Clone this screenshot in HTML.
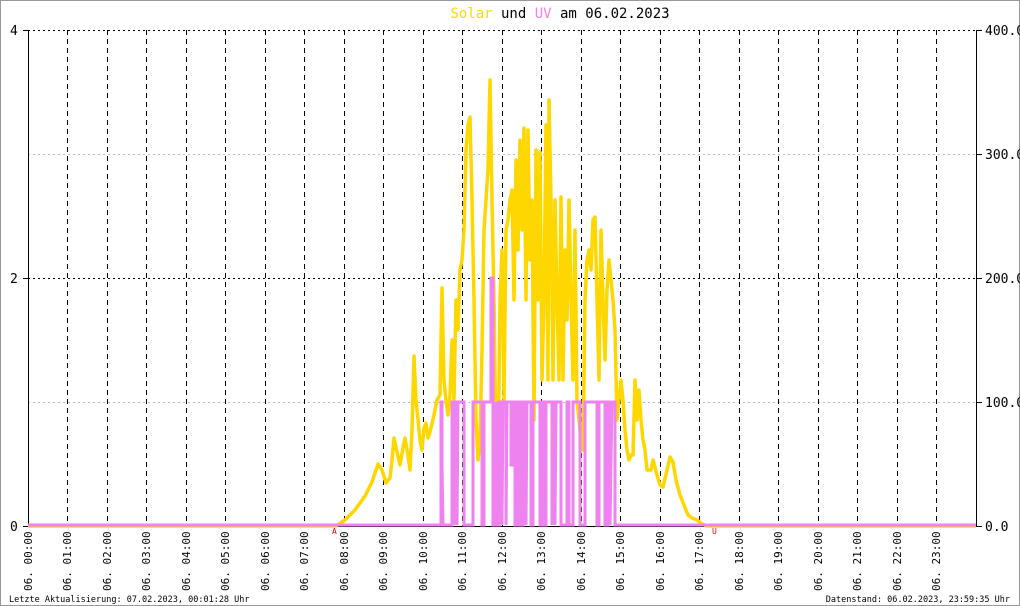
<!DOCTYPE html>
<html><head><meta charset="utf-8"><style>
html,body{margin:0;padding:0;background:#fff}
svg{display:block}
text{font-family:"DejaVu Sans Mono","Liberation Mono",monospace}
</style></head><body>
<svg width="1020" height="606" viewBox="0 0 1020 606" xmlns="http://www.w3.org/2000/svg">
<rect x="0.5" y="0.5" width="1019" height="605" fill="#fff" stroke="#999" stroke-width="1"/>
<text x="560" y="18" font-size="14" text-anchor="middle"><tspan fill="#ffd700">Solar</tspan> und <tspan fill="#ee82ee">UV</tspan> am 06.02.2023</text>
<g stroke-width="1" stroke-dasharray="2,3">
<line x1="28" y1="30.5" x2="976" y2="30.5" stroke="#000"/>
<line x1="28" y1="154.5" x2="976" y2="154.5" stroke="#bbb"/>
<line x1="28" y1="278.5" x2="976" y2="278.5" stroke="#000"/>
<line x1="28" y1="402.5" x2="976" y2="402.5" stroke="#bbb"/>
</g>
<g stroke="#000" stroke-width="1" stroke-dasharray="5,4">
<line x1="67.5" y1="30" x2="67.5" y2="526"/><line x1="107.5" y1="30" x2="107.5" y2="526"/><line x1="146.5" y1="30" x2="146.5" y2="526"/><line x1="186.5" y1="30" x2="186.5" y2="526"/><line x1="225.5" y1="30" x2="225.5" y2="526"/><line x1="265.5" y1="30" x2="265.5" y2="526"/><line x1="304.5" y1="30" x2="304.5" y2="526"/><line x1="344.5" y1="30" x2="344.5" y2="526"/><line x1="383.5" y1="30" x2="383.5" y2="526"/><line x1="423.5" y1="30" x2="423.5" y2="526"/><line x1="462.5" y1="30" x2="462.5" y2="526"/><line x1="502.5" y1="30" x2="502.5" y2="526"/><line x1="541.5" y1="30" x2="541.5" y2="526"/><line x1="581.5" y1="30" x2="581.5" y2="526"/><line x1="620.5" y1="30" x2="620.5" y2="526"/><line x1="660.5" y1="30" x2="660.5" y2="526"/><line x1="699.5" y1="30" x2="699.5" y2="526"/><line x1="739.5" y1="30" x2="739.5" y2="526"/><line x1="778.5" y1="30" x2="778.5" y2="526"/><line x1="818.5" y1="30" x2="818.5" y2="526"/><line x1="857.5" y1="30" x2="857.5" y2="526"/><line x1="897.5" y1="30" x2="897.5" y2="526"/><line x1="936.5" y1="30" x2="936.5" y2="526"/>
</g>
<g stroke="#000" stroke-width="1">
<line x1="28.5" y1="30" x2="28.5" y2="527"/>
<line x1="976.5" y1="30" x2="976.5" y2="527"/>
<line x1="28" y1="526.5" x2="977" y2="526.5"/>
<line x1="23" y1="30.5" x2="29" y2="30.5"/><line x1="23" y1="278.5" x2="29" y2="278.5"/><line x1="23" y1="526.5" x2="29" y2="526.5"/>
<line x1="976" y1="30.5" x2="982" y2="30.5"/><line x1="976" y1="154.5" x2="982" y2="154.5"/><line x1="976" y1="278.5" x2="982" y2="278.5"/><line x1="976" y1="402.5" x2="982" y2="402.5"/><line x1="976" y1="526.5" x2="982" y2="526.5"/>
</g>
<g font-size="13" fill="#000">
<text x="10" y="35">4</text><text x="10" y="283">2</text><text x="10" y="531">0</text>
<text x="985" y="35">400.0</text><text x="985" y="159">300.0</text><text x="985" y="283">200.0</text><text x="985" y="407">100.0</text><text x="985" y="531">0.0</text>
</g>
<polyline fill="none" stroke="#ffd700" stroke-width="3.5" stroke-linejoin="round" points="28,526 336,526 345,520 355,510 365,496 372,482 378,464 382,470 386,483 390,478 392,460 394,438 397,452 400,465 403,448 405,438 408,455 410,470 412,430 414,356 416,400 418,420 420,440 422,450 424,428 426,423 428,438 430,432 434,415 437,400 440,395 442,288 444,380 446,400 448,415 450,395 452,340 454,400 456,300 458,330 460,270 462,260 464,230 466,150 468,125 470,117 472,200 474,300 476,420 478,460 480,440 482,350 484,230 486,200 488,170 490,80 492,200 494,300 496,450 498,470 500,300 502,250 504,400 506,230 508,220 510,200 512,190 514,300 516,160 518,250 520,140 522,230 524,128 526,300 528,130 530,260 532,200 534,420 536,150 538,300 540,152 542,380 544,300 546,125 548,380 549,100 551,200 553,380 555,200 557,300 559,380 561,197 563,380 565,250 567,320 569,200 571,300 573,380 575,230 577,400 579,420 581,440 583,450 585,300 587,260 589,250 591,270 593,220 595,217 597,300 599,380 601,230 603,300 605,360 607,290 609,260 611,280 613,300 615,330 617,420 619,400 621,380 623,400 625,430 627,450 629,460 631,455 633,455 635,380 637,420 639,390 641,420 643,440 645,450 647,470 651,470 653,460 657,475 660,485 663,487 667,470 670,457 673,462 676,480 680,495 684,505 688,515 692,518 697,520 702,524 707,526 976,526"/>
<polyline fill="none" stroke="#ee82ee" stroke-width="3" stroke-linejoin="miter" points="28,525 441,525 441,402 442,402 442,465 443,525 452,525 452,402 454,402 454,525 455,402 457,402 457,525 458,402 464,402 464,525 473,525 473,402 482,402 482,525 484,525 484,402 491,402 491,278 493,278 493,525 496,525 496,402 497,525 499,525 499,402 502,402 502,525 503,402 506,402 506,525 507,402 511,402 511,465 513,465 513,402 515,402 515,525 518,525 518,402 521,402 521,525 523,525 523,402 526,402 526,525 527,402 531,402 531,525 533,525 533,402 540,402 540,525 542,525 542,402 544,402 544,525 546,525 546,402 552,402 552,525 553,402 555,402 555,525 556,402 561,402 561,525 567,525 567,402 569,402 569,525 573,525 573,402 580,402 580,525 585,525 585,402 597,402 597,525 599,525 599,402 605,402 605,525 608,525 608,402 610,402 610,525 612,402 615,402 615,525 976,525"/>
<text x="332" y="534" font-size="8" fill="#f00">A</text>
<text x="712" y="534" font-size="8" fill="#f00">U</text>
<g font-size="11" fill="#000">
<text transform="translate(32,591) rotate(-90)">06. 00:00</text>
<text transform="translate(71,591) rotate(-90)">06. 01:00</text>
<text transform="translate(111,591) rotate(-90)">06. 02:00</text>
<text transform="translate(150,591) rotate(-90)">06. 03:00</text>
<text transform="translate(190,591) rotate(-90)">06. 04:00</text>
<text transform="translate(229,591) rotate(-90)">06. 05:00</text>
<text transform="translate(269,591) rotate(-90)">06. 06:00</text>
<text transform="translate(308,591) rotate(-90)">06. 07:00</text>
<text transform="translate(348,591) rotate(-90)">06. 08:00</text>
<text transform="translate(387,591) rotate(-90)">06. 09:00</text>
<text transform="translate(427,591) rotate(-90)">06. 10:00</text>
<text transform="translate(466,591) rotate(-90)">06. 11:00</text>
<text transform="translate(506,591) rotate(-90)">06. 12:00</text>
<text transform="translate(545,591) rotate(-90)">06. 13:00</text>
<text transform="translate(585,591) rotate(-90)">06. 14:00</text>
<text transform="translate(624,591) rotate(-90)">06. 15:00</text>
<text transform="translate(664,591) rotate(-90)">06. 16:00</text>
<text transform="translate(703,591) rotate(-90)">06. 17:00</text>
<text transform="translate(743,591) rotate(-90)">06. 18:00</text>
<text transform="translate(782,591) rotate(-90)">06. 19:00</text>
<text transform="translate(822,591) rotate(-90)">06. 20:00</text>
<text transform="translate(861,591) rotate(-90)">06. 21:00</text>
<text transform="translate(901,591) rotate(-90)">06. 22:00</text>
<text transform="translate(940,591) rotate(-90)">06. 23:00</text>
</g>
<text x="9" y="602" font-size="8.5" fill="#000">Letzte Aktualisierung: 07.02.2023, 00:01:28 Uhr</text>
<text x="1010" y="602" font-size="8.5" fill="#000" text-anchor="end">Datenstand: 06.02.2023, 23:59:35 Uhr</text>
</svg>
</body></html>
